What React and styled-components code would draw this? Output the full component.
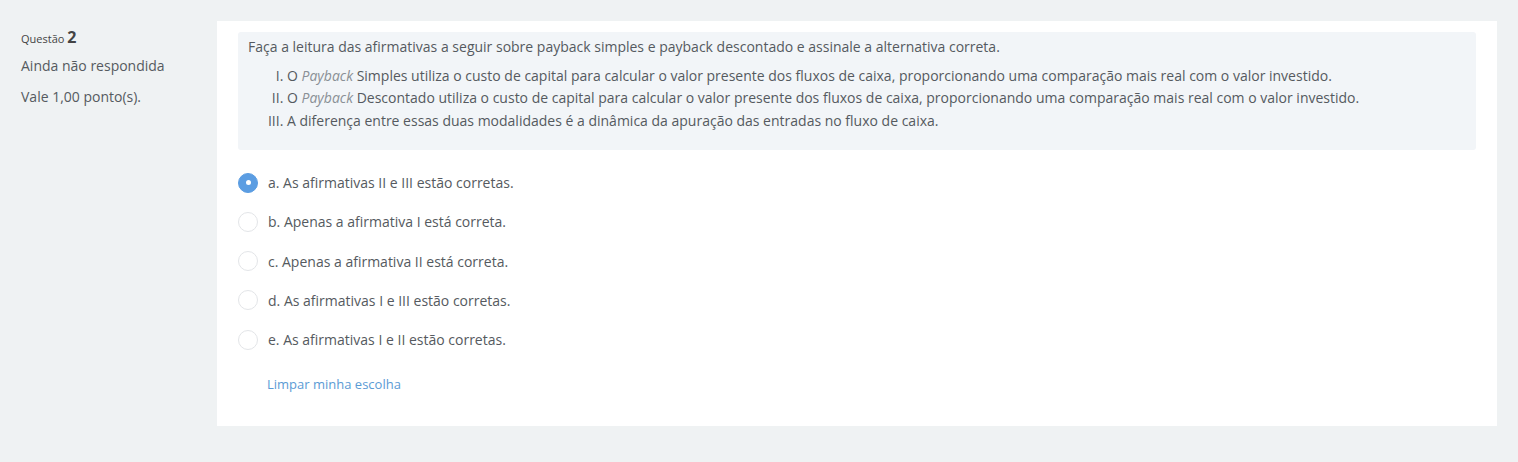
import React, { useState } from "react";
import styled, { createGlobalStyle } from "styled-components";

const GlobalStyle = createGlobalStyle`
  html, body {
    margin: 0;
    padding: 0;
    background: #eff2f3;
    font-family: "Open Sans", "Liberation Sans", sans-serif;
    color: #555a60;
  }
`;

const Page = styled.div`
  display: flex;
  align-items: flex-start;
  padding: 21px 21px 36px 21px;
  min-height: 462px;
  box-sizing: border-box;
`;

const Info = styled.div`
  width: 196px;
  flex-shrink: 0;
  padding-top: 6px;
  font-size: 14px;
`;

const QNo = styled.h3`
  margin: 0 0 7px;
  font-size: 11px;
  font-weight: 400;
  line-height: 20px;
  color: #444;
`;

const QNum = styled.span`
  font-size: 16px;
  font-weight: 700;
  color: #444;
`;

const State = styled.div`
  line-height: 20px;
  margin-bottom: 11px;
`;

const Panel = styled.div`
  flex: 1;
  background: #fff;
  padding: 11px 21px 32px 21px;
`;

const QText = styled.div`
  background: #f2f5f8;
  border-radius: 3px;
  padding: 4px 10px 18px 10px;
  font-size: 14px;
  line-height: 22.5px;
`;

const Lead = styled.p`
  margin: 0 0 6px;
`;

const Statements = styled.ol`
  list-style-type: upper-roman;
  margin: 0;
  padding-left: 39px;
`;

const Em = styled.em`
  color: #8a9096;
`;

const Answers = styled.div`
  display: flex;
  flex-direction: column;
  margin-top: 13px;
`;

const Option = styled.label`
  display: flex;
  align-items: center;
  gap: 10px;
  height: 39.25px;
  font-size: 14px;
  cursor: pointer;
`;

const Radio = styled.span`
  width: 20px;
  height: 20px;
  border-radius: 50%;
  box-sizing: border-box;
  flex-shrink: 0;
  display: flex;
  align-items: center;
  justify-content: center;
  background: ${(p) => (p.checked ? "#5b9de2" : "#fff")};
  border: 1px solid ${(p) => (p.checked ? "#5b9de2" : "#e3e5e8")};
  &::after {
    content: "";
    display: ${(p) => (p.checked ? "block" : "none")};
    width: 5px;
    height: 5px;
    border-radius: 50%;
    background: #fff;
  }
`;

const Clear = styled.a`
  display: inline-block;
  margin: 16px 0 0 29px;
  font-size: 13px;
  color: #5b9bd5;
  text-decoration: none;
  cursor: pointer;
`;

const options = [
  "a. As afirmativas II e III estão corretas.",
  "b. Apenas a afirmativa I está correta.",
  "c. Apenas a afirmativa II está correta.",
  "d. As afirmativas I e III estão corretas.",
  "e. As afirmativas I e II estão corretas.",
];

export default function App() {
  const [sel, setSel] = useState(0);
  return (
    <>
      <GlobalStyle />
      <Page>
        <Info>
          <QNo>
            Questão <QNum>2</QNum>
          </QNo>
          <State>Ainda não respondida</State>
          <State>Vale 1,00 ponto(s).</State>
        </Info>
        <Panel>
          <QText>
            <Lead>
              Faça a leitura das afirmativas a seguir sobre payback simples e payback
              descontado e assinale a alternativa correta.
            </Lead>
            <Statements>
              <li>
                O <Em>Payback</Em> Simples utiliza o custo de capital para calcular o valor
                presente dos fluxos de caixa, proporcionando uma comparação mais real com o
                valor investido.
              </li>
              <li>
                O <Em>Payback</Em> Descontado utiliza o custo de capital para calcular o valor
                presente dos fluxos de caixa, proporcionando uma comparação mais real com o
                valor investido.
              </li>
              <li>
                A diferença entre essas duas modalidades é a dinâmica da apuração das entradas
                no fluxo de caixa.
              </li>
            </Statements>
          </QText>
          <Answers>
            {options.map((o, i) => (
              <Option key={i} onClick={() => setSel(i)}>
                <Radio checked={sel === i} />
                {o}
              </Option>
            ))}
          </Answers>
          <Clear onClick={() => setSel(null)}>Limpar minha escolha</Clear>
        </Panel>
      </Page>
    </>
  );
}
